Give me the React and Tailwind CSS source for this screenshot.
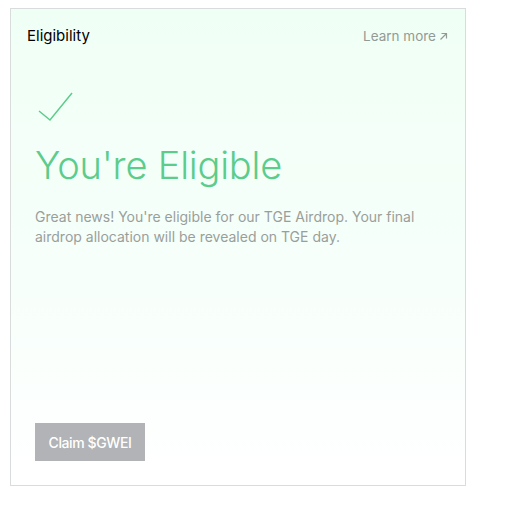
export default function App() {
  return (
    <div className="w-[506px] h-[506px] bg-white pl-[10px] pt-[8px]" style={{ fontFamily: 'Inter, "Noto Sans", sans-serif' }}>
      <div className="w-[456px] h-[478px] border border-[#d9dcdc] bg-gradient-to-b from-[#f0fff6] via-[#f6fffa] to-white flex flex-col">
        <div className="flex items-center justify-between px-4 pt-[17px]">
          <span className="text-[15px] text-black leading-5">Eligibility</span>
          <span className="text-[13.5px] text-[#939a95] leading-5 flex items-center gap-[3px] mr-[1px]">
            Learn more
            <svg width="9" height="9" viewBox="0 0 9 9" fill="none" stroke="#939a95" strokeWidth="1.2">
              <path d="M1.5 7.5 L7.5 1.5 M2.5 1.5 H7.5 V6.5" />
            </svg>
          </span>
        </div>
        <div className="px-6 pt-[46px] flex flex-col flex-1">
          <svg width="36" height="32" viewBox="0 0 36 32" fill="none" stroke="#5ccc8c" strokeWidth="1.5" className="ml-[2px]">
            <path d="M2 19 L13 28 L35 1" />
          </svg>
          <h1 className="mt-[19px] text-[38px] font-light leading-[44px] text-[#5ccc8c] tracking-[-0.2px]">You're Eligible</h1>
          <p className="mt-[20px] text-[14px] leading-5 text-[#9a9e9b] w-[390px]">
            Great news! You're eligible for our TGE Airdrop. Your final airdrop allocation will be revealed on TGE day.
          </p>
          <div className="flex-1" />
          <button className="mb-[24px] self-start w-[110px] h-[38px] bg-[#b1b3b6] text-white text-[14px] font-medium tracking-[-0.4px]">
            Claim $GWEI
          </button>
        </div>
      </div>
    </div>
  );
}
